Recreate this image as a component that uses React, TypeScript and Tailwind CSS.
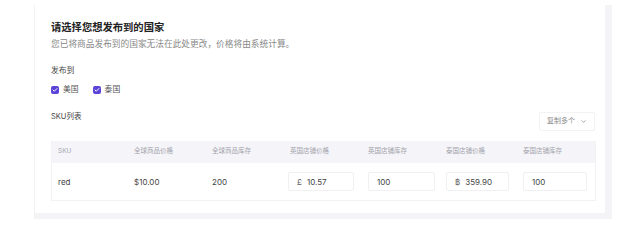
import { Check, ChevronDown } from "lucide-react";

const columns = ["SKU", "全球商品价格", "全球商品库存", "英国店铺价格", "英国店铺库存", "泰国店铺价格", "泰国店铺库存"];

function Box({ children }: { children: React.ReactNode }) {
  return <span className="flex h-[8px] w-[8px] items-center justify-center rounded-[2px] bg-[#5b43d9]">{children}</span>;
}

function Field({ prefix, value, className = "" }: { prefix?: string; value: string; className?: string }) {
  return (
    <div className={`flex h-[19px] items-center gap-[5px] rounded-[2px] border border-[#f0f0f3] bg-white px-[8px] text-[8px] text-[#444] ${className}`}>
      {prefix && <span className="text-[#666]">{prefix}</span>}
      <span>{value}</span>
    </div>
  );
}

export default function App() {
  return (
    <div className="h-[234px] w-[638px] bg-white pl-[34px] pt-[5px] font-['Inter','Noto_Sans_CJK_SC',sans-serif]">
      <div className="w-[578px] bg-[#f4f4f7] pb-[6px] pr-[7px]">
        <div className="h-[208px] w-[571px] border-l border-[#f2f2f4] bg-white pl-[16px] pr-[10px] pt-[15px]">
          <h2 className="text-[10.3px] leading-[14px] font-semibold text-[#222]">请选择您想发布到的国家</h2>
          <p className="mt-[4px] text-[8.7px] leading-[12px] text-[#888]">
            您已将商品发布到的国家无法在此处更改，价格将由系统计算。
          </p>
          <div className="mt-[14px] text-[7.8px] leading-[12px] text-[#444]">发布到</div>
          <div className="mt-[8px] flex h-[12px] items-center text-[7.8px] text-[#555]">
            <Box>
              <Check className="h-[6px] w-[6px] text-white" strokeWidth={4} />
            </Box>
            <span className="ml-[4px]">美国</span>
            <span className="ml-[14px]">
              <Box>
                <Check className="h-[6px] w-[6px] text-white" strokeWidth={4} />
              </Box>
            </span>
            <span className="ml-[4px]">泰国</span>
          </div>
          <div className="mt-[15px] flex items-start justify-between">
            <span className="text-[7.5px] leading-[12px] text-[#444]">SKU列表</span>
            <button className="mt-[1px] flex h-[19px] w-[56px] items-center justify-center gap-[5px] rounded-[2px] border border-[#f3f3f5] text-[7px] text-[#888]">
              复制多个
              <ChevronDown className="h-[7px] w-[7px]" strokeWidth={2.5} />
            </button>
          </div>
          <div className="mt-[10px] w-[545px] border-x border-b border-[#f2f2f5]">
            <div className="grid h-[22px] grid-cols-[76px_78px_78px_78px_78px_77px_1fr] items-center bg-[#f5f5f9] pl-[6px] text-[6.5px] text-[#a3a3ab]">
              {columns.map((c) => (
                <span key={c}>{c}</span>
              ))}
            </div>
            <div className="grid h-[37px] grid-cols-[76px_78px_78px_78px_78px_77px_1fr] items-center pl-[6px] text-[8px] text-[#444]">
              <span>red</span>
              <span>$10.00</span>
              <span>200</span>
              <Field prefix="£" value="10.57" className="-ml-[2px] w-[66px]" />
              <Field value="100" className="w-[67px]" />
              <Field prefix="฿" value="359.90" className="w-[63px]" />
              <Field value="100" className="w-[64px]" />
            </div>
          </div>
        </div>
      </div>
    </div>
  );
}
